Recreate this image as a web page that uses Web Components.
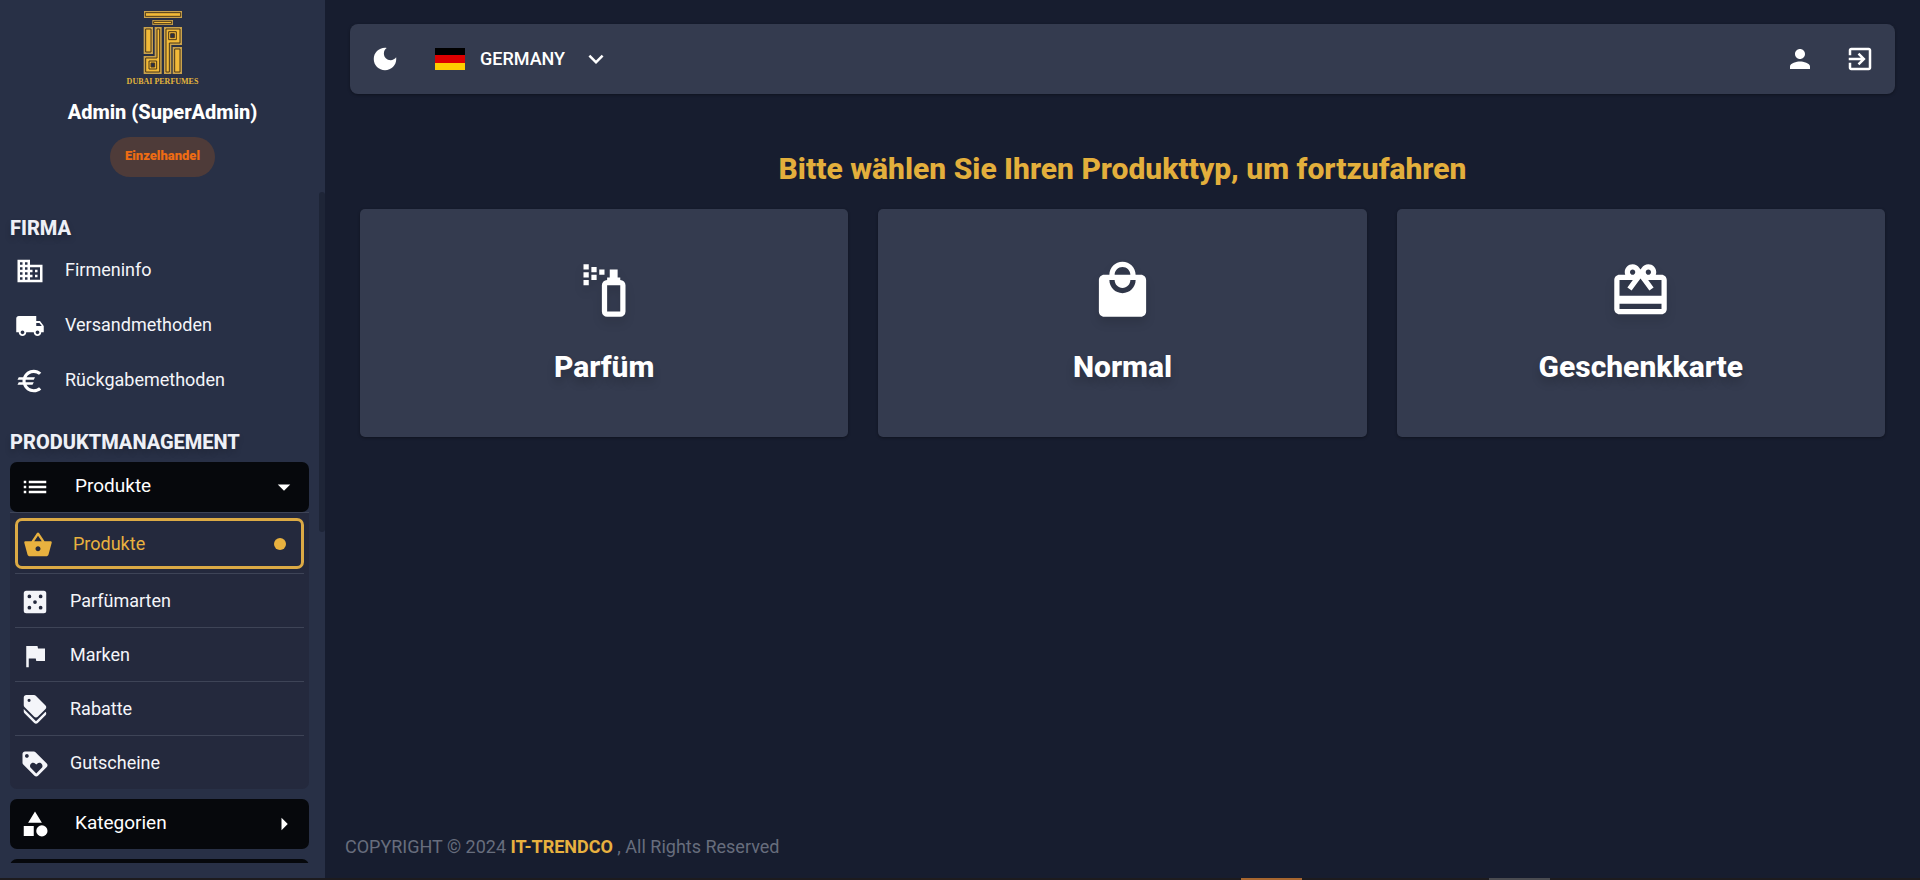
<!DOCTYPE html>
<html lang="de">
<head>
<meta charset="utf-8">
<meta name="viewport" content="width=device-width, initial-scale=1">
<title>Dubai Perfumes – Admin</title>
<style>
  :root {
    --page: #171d2f;
    --side: #283046;
    --panel: #343b4f;
    --sub: #24293d;
    --ink: #06080c;
    --gold: #e8b13f;
    --line: #3e4457;
    --text: #ffffff;
  }
  html, body { margin: 0; height: 100%; background: var(--page); }
  body { font-family: Roboto, "Liberation Sans", sans-serif; font-size: 18px; line-height: 24px; color: var(--text); }
</style>
</head>
<body>
<admin-shell>
  <side-bar slot="side" user="Admin (SuperAdmin)" badge="Einzelhandel">
    <nav-section label="FIRMA">
      <nav-item icon="building">Firmeninfo</nav-item>
      <nav-item icon="truck">Versandmethoden</nav-item>
      <nav-item icon="euro">Rückgabemethoden</nav-item>
    </nav-section>
    <nav-section label="PRODUKTMANAGEMENT">
      <nav-group icon="list" label="Produkte" open>
        <sub-item icon="basket" active>Produkte</sub-item>
        <sub-item icon="dice">Parfümarten</sub-item>
        <sub-item icon="flag">Marken</sub-item>
        <sub-item icon="tags">Rabatte</sub-item>
        <sub-item icon="loyalty">Gutscheine</sub-item>
      </nav-group>
      <nav-group icon="shapes" label="Kategorien"></nav-group>
      <nav-group></nav-group>
    </nav-section>
  </side-bar>
  <top-bar slot="top"></top-bar>
  <type-picker>
    <span slot="title">Bitte wählen Sie Ihren Produkttyp, um fortzufahren</span>
    <type-card icon="spray">Parfüm</type-card>
    <type-card icon="bag">Normal</type-card>
    <type-card icon="gift">Geschenkkarte</type-card>
  </type-picker>
  <page-footer slot="foot"></page-footer>
  <status-strip slot="strip"></status-strip>
</admin-shell>

<script>
const ICONS = {
  building: '<path d="M12 7V3H2v18h20V7H12zM6 19H4v-2h2v2zm0-4H4v-2h2v2zm0-4H4V9h2v2zm0-4H4V5h2v2zm4 12H8v-2h2v2zm0-4H8v-2h2v2zm0-4H8V9h2v2zm0-4H8V5h2v2zm10 12h-8v-2h2v-2h-2v-2h2v-2h-2V9h8v10zm-2-8h-2v2h2v-2zm0 4h-2v2h2v-2z"/>',
  truck: '<path d="M20 8h-3V4H3c-1.1 0-2 .9-2 2v11h2c0 1.66 1.34 3 3 3s3-1.34 3-3h6c0 1.66 1.34 3 3 3s3-1.34 3-3h2v-5l-3-4zM6 18.5c-.83 0-1.5-.67-1.5-1.5s.67-1.5 1.5-1.5 1.5.67 1.5 1.5-.67 1.5-1.5 1.5zm13.5-9l1.96 2.5H17V9.5h2.5zm-1.5 9c-.83 0-1.5-.67-1.5-1.5s.67-1.5 1.5-1.5 1.5.67 1.5 1.5-.67 1.5-1.5 1.5z"/>',
  euro: '<path d="M15 18.5c-2.51 0-4.68-1.42-5.76-3.5H14l1-2H8.58c-.05-.33-.08-.66-.08-1s.03-.67.08-1H15l1-2H9.24C10.32 6.92 12.5 5.5 15 5.5c1.61 0 3.09.59 4.23 1.57L21 5.3C19.41 3.87 17.3 3 15 3c-3.92 0-7.24 2.51-8.48 6H3l-1 2h4.06c-.04.33-.06.66-.06 1s.02.67.06 1H3l-1 2h4.52c1.24 3.49 4.56 6 8.48 6 2.31 0 4.41-.87 6-2.3l-1.78-1.77c-1.13.98-2.6 1.57-4.22 1.57z"/>',
  list: '<path d="M3 13h2v-2H3v2zm0 4h2v-2H3v2zm0-8h2V7H3v2zm4 4h14v-2H7v2zm0 4h14v-2H7v2zM7 7v2h14V7H7z"/>',
  basket: '<path d="M17.21 9l-4.38-6.56c-.19-.28-.51-.42-.83-.42-.32 0-.64.14-.83.43L6.79 9H2c-.55 0-1 .45-1 1 0 .09.01.18.04.27l2.54 9.27c.23.84 1 1.46 1.92 1.46h13c.92 0 1.69-.62 1.93-1.46l2.54-9.27L23 10c0-.55-.45-1-1-1h-4.79zM9 9l3-4.4L15 9H9zm3 8c-1.1 0-2-.9-2-2s.9-2 2-2 2 .9 2 2-.9 2-2 2z"/>',
  dice: '<path fill-rule="evenodd" d="M5 3h14a2 2 0 0 1 2 2v14a2 2 0 0 1-2 2H5a2 2 0 0 1-2-2V5a2 2 0 0 1 2-2zM6 7.500a1.500 1.500 0 1 0 3 0a1.500 1.500 0 1 0-3 0zM15 7.500a1.500 1.500 0 1 0 3 0a1.500 1.500 0 1 0-3 0zM10.500 12a1.500 1.500 0 1 0 3 0a1.500 1.500 0 1 0-3 0zM6 16.500a1.500 1.500 0 1 0 3 0a1.500 1.500 0 1 0-3 0zM15 16.500a1.500 1.500 0 1 0 3 0a1.500 1.500 0 1 0-3 0z"/>',
  flag: '<path d="M14.4 6L14 4H5v17h2v-7h5.6l.4 2h7V6z"/>',
  tags: '<path fill-rule="evenodd" d="M12.79 21L3 11.210v2c0 .53.21 1.040.59 1.410l7.790 7.790c.78.78 2.050.78 2.830 0l6.210-6.210c.78-.78.78-2.050 0-2.830L12.790 21z"/><path fill-rule="evenodd" d="M11.38 17.410c.39.39.9.59 1.410.59.51 0 1.020-.2 1.410-.59l6.210-6.210c.78-.78.78-2.050 0-2.830L12.620.58C12.250.21 11.740 0 11.210 0H5C3.900 0 3 .9 3 2v6.210c0 .53.21 1.040.59 1.410l7.790 7.790zM6 4.250a1.250 1.250 0 1 0 2.500 0a1.250 1.250 0 1 0-2.500 0z"/>',
  loyalty: '<path d="M21.41 11.58l-9-9C12.05 2.22 11.55 2 11 2H4c-1.1 0-2 .9-2 2v7c0 .55.22 1.05.59 1.42l9 9c.36.36.86.58 1.41.58.55 0 1.05-.22 1.41-.59l7-7c.37-.36.59-.86.59-1.41 0-.55-.23-1.06-.59-1.42zM5.5 7C4.67 7 4 6.33 4 5.5S4.67 4 5.5 4 7 4.67 7 5.5 6.33 7 5.5 7zm11.77 8.27L13 19.54l-4.27-4.27C8.28 14.81 8 14.19 8 13.5c0-1.38 1.12-2.5 2.5-2.5.69 0 1.32.28 1.77.74l.73.72.73-.73c.45-.45 1.08-.73 1.77-.73 1.38 0 2.5 1.12 2.5 2.5 0 .69-.28 1.32-.73 1.77z"/>',
  shapes: '<path d="M12 2l-5.5 9h11zM3 13.500h8v8H3z"/><circle cx="17.5" cy="17.5" r="4.5"/>',
  down: '<path d="M7 10l5 5 5-5z"/>',
  right: '<path d="M10 17l5-5-5-5z"/>',
  moon: '<path d="M12 3c-4.970 0-9 4.030-9 9s4.030 9 9 9 9-4.030 9-9c0-.46-.04-.92-.1-1.360-.98 1.370-2.580 2.260-4.400 2.260-2.980 0-5.400-2.420-5.400-5.400 0-1.810.89-3.420 2.260-4.400C12.920 3.040 12.460 3 12 3z"/>',
  chevron: '<path d="M7.41 8.59L12 13.170l4.590-4.580L18 10l-6 6-6-6z"/>',
  person: '<path d="M12 12c2.21 0 4-1.79 4-4s-1.79-4-4-4-4 1.79-4 4 1.79 4 4 4zm0 2c-2.67 0-8 1.34-8 4v2h16v-2c0-2.66-5.33-4-8-4z"/>',
  exit: '<path d="M10.09 15.59L11.5 17l5-5-5-5-1.41 1.41L12.67 11H3v2h9.67l-2.58 2.59zM19 3H5c-1.11 0-2 .9-2 2v4h2V5h14v14H5v-4H3v4c0 1.1.89 2 2 2h14c1.1 0 2-.9 2-2V5c0-1.1-.9-2-2-2z"/>',
  spray: '<path fill-rule="evenodd" d="M4 2h2v2H4zM4 5h2v2H4zM4 8h2v2H4zM7 3h2v2H7zM7 6h2v2H7zM10 4h2v2h-2zM14 4h3v3h1v1a2 2 0 0 1 2 2v10a2 2 0 0 1-2 2h-5a2 2 0 0 1-2-2V10a2 2 0 0 1 2-2V7h1zM13 10v10h5V10z"/>',
  bag: '<path d="M19 6h-2c0-2.760-2.240-5-5-5S7 3.240 7 6H5c-1.100 0-1.990.9-1.990 2L3 20c0 1.100.9 2 2 2h14c1.100 0 2-.9 2-2V8c0-1.100-.9-2-2-2zm-7-3c1.660 0 3 1.340 3 3H9c0-1.660 1.340-3 3-3zm0 10c-2.760 0-5-2.240-5-5h2c0 1.660 1.340 3 3 3s3-1.340 3-3h2c0 2.760-2.240 5-5 5z"/>',
  gift: '<path d="M20 6h-2.18c.11-.31.18-.65.18-1 0-1.66-1.34-3-3-3-1.05 0-1.96.54-2.5 1.35l-.5.67-.5-.68C10.96 2.54 10.05 2 9 2 7.34 2 6 3.34 6 5c0 .35.07.69.18 1H4c-1.11 0-1.99.89-1.99 2L2 19c0 1.11.89 2 2 2h16c1.11 0 2-.89 2-2V8c0-1.11-.89-2-2-2zm-5-2c.55 0 1 .45 1 1s-.45 1-1 1-1-.45-1-1 .45-1 1-1zM9 4c.55 0 1 .45 1 1s-.45 1-1 1-1-.45-1-1 .45-1 1-1zm11 15H4v-2h16v2zm0-5H4V8h5.08L7 10.83 8.62 12 11 8.76l1-1.36 1 1.36L15.38 12 17 10.83 14.92 8H20v6z"/>'
};
const icon = (name, size = 30) =>
  `<svg viewBox="0 0 24 24" width="${size}" height="${size}" fill="currentColor" aria-hidden="true">${ICONS[name] || ''}</svg>`;

const define = (tag, render) => customElements.define(tag, class extends HTMLElement {
  constructor() {
    super();
    this.attachShadow({ mode: 'open' });
  }
  connectedCallback() {
    this.shadowRoot.innerHTML = `<style>*{box-sizing:border-box} svg{display:block;flex:none}</style>` + render(this);
  }
});

define('admin-shell', () => `
  <style>
    :host { display: grid; grid-template: minmax(0, 1fr) auto / 325px minmax(0, 1fr); height: 100vh; }
    .main { display: flex; flex-direction: column; min-width: 0; overflow: auto; }
    main { flex: 1; }
    .strip { grid-column: 1 / -1; }
    slot[name=side] { display: flex; flex-direction: column; min-height: 0; background: var(--side); }
  </style>
  <slot name="side"></slot>
  <div class="main">
    <slot name="top"></slot>
    <main><slot></slot></main>
    <slot name="foot"></slot>
  </div>
  <div class="strip"><slot name="strip"></slot></div>`);

define('brand-logo', () => `
  <style>
    :host { display: flex; flex-direction: column; align-items: center; color: #e2b43c; }
    span { font: bold 8px/14px "Liberation Serif", serif; white-space: nowrap; }
    .o { fill: #c9a24c; } .i { fill: #f2ba38; stroke: #4a3719; stroke-width: 3; } .n { fill: none; stroke: #4a3719; stroke-width: 3; }
    .h { fill: #28304a; stroke: #4a3719; stroke-width: 3; }
  </style>
  <svg viewBox="53 27 210 198" width="70" height="66" role="img" aria-label="Dubai Perfumes">
    <path class="o" d="M101 33h114v21H101zM126 60h62v15h-62zM100 81h28v81h-28zM133 81h21v141h-54v-54h33zM161 81h54v54h-32v87h-22zM187 141h28v81h-28z"/>
    <path class="i" d="M105 38h106v11H105zM130 64h54v7h-54zM106 87h16v69h-16zM193 147h16v69h-16zM140 87h8v129h-42v-42h34zM167 87h42v42h-32v87h-10z"/>
    <path class="n" d="M116 183h23v24h-23zM175 95h23v24h-23z"/>
    <path class="h" d="M122 189h11v12h-11zM181 101h11v12h-11z"/>
  </svg>
  <span>DUBAI PERFUMES</span>`);

define('side-bar', el => `
  <style>
    :host { display: flex; flex-direction: column; flex: 1; min-height: 0; position: relative; padding-bottom: 15px; }
    header { display: flex; flex-direction: column; align-items: center; padding-top: 9px; height: 192px; flex: none; }
    h1 { margin: 11px 0 13px; font-size: 20px; line-height: 24px; font-weight: 800; }
    .badge { height: 40px; padding: 0 15px; border-radius: 20px; background: #4e3b39; color: #ee6c13;
             font-size: 13px; line-height: 38px; font-weight: 900; }
    nav { flex: 1; min-height: 0; overflow: hidden; padding: 24px 16px 0 10px; }
    .thumb { position: absolute; right: 0; top: 192px; width: 6px; height: 340px; border-radius: 3px; background: #1e2537; }
  </style>
  <header><brand-logo></brand-logo><h1>${el.getAttribute('user')}</h1><span class="badge">${el.getAttribute('badge')}</span></header>
  <nav><slot></slot></nav>
  <div class="thumb"></div>`);

define('nav-section', el => `
  <style>
    :host { display: block; margin-bottom: 17px; }
    h2 { margin: 0 0 8px; font-size: 20px; line-height: 24px; font-weight: 800; color: #eef0f6; text-shadow: 0 4px 6px rgba(0,0,0,.2); }
    .items { display: flex; flex-direction: column; }
  </style>
  <h2>${el.getAttribute('label')}</h2><div class="items"><slot></slot></div>`);

define('nav-item', el => `
  <style>
    :host { display: block; padding-bottom: 12px; }
    a { display: flex; align-items: center; gap: 20px; height: 43px; padding-left: 5px; color: #f4f5f9; text-decoration: none; }
    svg { color: #fff; margin-top: 2px; }
  </style>
  <a href="#">${icon(el.getAttribute('icon'))}<span><slot></slot></span></a>`);

define('nav-group', el => {
  const open = el.hasAttribute('open');
  const label = el.getAttribute('label') || '';
  return `
  <style>
    :host { display: block; margin-bottom: 10px; }
    button { display: flex; align-items: center; width: 100%; height: 50px; padding: 0 10px; border: 0; border-radius: 7px;
             background: var(--ink); color: #fff; font: inherit; font-size: 19px; line-height: 24px; text-align: left; }
    .label { flex: 1; padding: 0 0 2px 25px; }
    .sub { background: var(--sub); border-top: 1px solid var(--line); border-radius: 0 0 7px 7px; padding: 0 5px; }
  </style>
  <button type="button" aria-expanded="${open}">${label ? icon(el.getAttribute('icon')) : ''}<span class="label">${label}</span>${label ? icon(open ? 'down' : 'right') : ''}</button>
  ${open ? '<div class="sub"><slot></slot></div>' : ''}`;
});

define('sub-item', el => `
  <style>
    :host { display: block; border-top: 1px solid var(--line); }
    :host([active]) { border: 0; padding: 5px 0 4px; }
    a { display: flex; align-items: center; gap: 20px; height: 53px; padding-left: 5px; color: #f4f5f9; text-decoration: none; }
    span { flex: 1; }
    a svg { margin-top: 2px; }
    .on { height: 51px; border: 3px solid #dcaa45; border-radius: 7px; color: var(--gold); }
    i { width: 12px; height: 12px; border-radius: 50%; background: var(--gold); margin-right: 15px; }
  </style>
  <a href="#" class="${el.hasAttribute('active') ? 'on' : ''}">${icon(el.getAttribute('icon'))}<span><slot></slot></span>${el.hasAttribute('active') ? '<i></i>' : ''}</a>`);

define('top-bar', () => `
  <style>
    :host { display: flex; align-items: center; height: 70px; flex: none; margin: 24px 25px 0; padding: 0 20px;
            background: var(--panel); border-radius: 8px; box-shadow: 0 1px 3px rgba(0,0,0,.35); }
    button { display: flex; padding: 0; border: 0; background: none; color: #fff; }
    .lang { display: flex; align-items: center; margin-left: 35px; flex: 1; }
    .lang > svg:last-child { margin-left: 15px; }
    select { appearance: none; border: 0; padding: 0; margin-left: 15px; background: none; color: #fff;
             font: inherit; font-weight: 500; }
    .tools { display: flex; gap: 30px; }
  </style>
  <button type="button" aria-label="Dunkelmodus">${icon('moon')}</button>
  <label class="lang">
    <svg viewBox="0 0 30 22" width="30" height="22" aria-hidden="true"><path fill="#000" d="M0 0h30v8H0z"/><path fill="#d00" d="M0 7h30v8H0z"/><path fill="#ffce00" d="M0 15h30v7H0z"/></svg>
    <select aria-label="Land"><option>GERMANY</option></select>
    ${icon('chevron')}
  </label>
  <div class="tools">
    <button type="button" aria-label="Profil">${icon('person')}</button>
    <button type="button" aria-label="Abmelden">${icon('exit')}</button>
  </div>`);

define('type-picker', () => `
  <style>
    :host { display: block; padding: 55px 35px 0; }
    h2 { margin: 0 0 20px; text-align: center; font-size: 30px; line-height: 40px; font-weight: 800; color: #e3af3c; }
    .cards { display: grid; grid-template-columns: repeat(3, minmax(0, 1fr)); gap: 30px; }
  </style>
  <h2><slot name="title"></slot></h2>
  <div class="cards"><slot></slot></div>`);

define('type-card', el => `
  <style>
    :host { display: block; }
    button { display: flex; flex-direction: column; align-items: center; gap: 25px; width: 100%; height: 228px; padding: 50px 20px 0;
             border: 0; border-radius: 5px; background: var(--panel); color: #fff; font: inherit; font-size: 30px;
             line-height: 40px; font-weight: 800; box-shadow: 0 1px 3px rgba(0,0,0,.35); text-shadow: 0 6px 8px rgba(0,0,0,.18); }
    svg { filter: drop-shadow(0 6px 5px rgba(0,0,0,.12)); }
  </style>
  <button type="button">${icon(el.getAttribute('icon'), 63)}<span><slot></slot></span></button>`);

define('page-footer', () => `
  <style>
    :host { display: block; padding: 0 20px 19px; color: #676d7d; }
    a { color: var(--gold); font-weight: 700; text-decoration: none; }
  </style>
  <footer>COPYRIGHT © 2024 <a href="#">IT-TRENDCO</a> , All Rights Reserved</footer>`);

define('status-strip', () => `
  <style>
    :host { display: grid; grid-template-columns: 1241fr 61fr 187fr 61fr 370fr; height: 2px; background: #1d1b1e; }
    .a { grid-column: 2; background: #a7662f; } .b { grid-column: 4; background: #4a4b50; }
  </style>
  <div class="a"></div><div class="b"></div>`);
</script>
</body>
</html>
